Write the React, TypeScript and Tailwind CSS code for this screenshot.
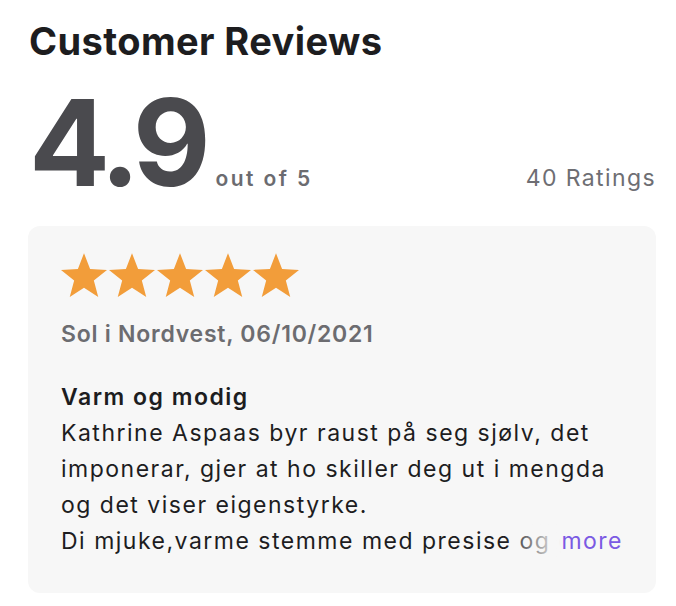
import React from 'react';

const Star: React.FC = () => (
  <svg viewBox="0 0 24 24" className="h-[48px] w-[48px] shrink-0" aria-hidden="true">
    <path
      d="M12 1.6l3.05 7.9 8.45.45-6.58 5.35 2.2 8.2L12 18.9l-7.12 4.6 2.2-8.2L.5 9.95l8.45-.45z"
      fill="#f29d3a"
    />
  </svg>
);

export default function App() {
  return (
    <div
      className="w-[676px] h-[606px] bg-white pl-[28px] pr-[20px] pt-[18px]"
      style={{ fontFamily: 'Inter, "Noto Sans", sans-serif' }}
    >
      <h1 className="pl-[1px] text-[38px] font-bold leading-[46px] tracking-[0.4px] text-[#1d1d1f]">
        Customer Reviews
      </h1>

      {/* Rating summary */}
      <div className="mt-[19px] flex items-baseline">
        <span className="pl-[1px] text-[120px] font-bold leading-[120px] tracking-[-6px] text-[#4a4a4e]">4.9</span>
        <span className="ml-[11px] text-[21px] font-semibold tracking-[2.4px] text-[#6b6b70]">out of 5</span>
        <span className="ml-auto text-[23px] tracking-[1.4px] text-[#6e6e73]">40 Ratings</span>
      </div>

      {/* Review card */}
      <div className="mt-[23px] rounded-[12px] bg-[#f7f7f7] px-[33px] pt-[24px] pb-[34px]">
        <div className="-ml-[1px] flex">
          <Star />
          <Star />
          <Star />
          <Star />
          <Star />
        </div>
        <p className="mt-[22px] text-[23px] font-semibold leading-[28px] tracking-[0.75px] text-[#6c6c70]">
          Sol i Nordvest, 06/10/2021
        </p>

        <div className="relative mt-[31px] text-[23px] leading-[36px] tracking-[1.5px] text-[#1d1d1f]">
          <h3 className="font-semibold">Varm og modig</h3>
          <div className="h-[144px] overflow-hidden">
            <p>Kathrine Aspaas byr raust på seg sjølv, det imponerar, gjer at ho skiller deg ut i mengda og det viser eigenstyrke.</p>
            <p className="whitespace-nowrap">Di mjuke,varme stemme med presise og gjennomtenkte ord fyller rommet.</p>
          </div>
          <div className="absolute bottom-0 right-0 flex h-[36px]">
            <div className="w-[56px] bg-gradient-to-r from-[#f7f7f7]/0 to-[#f7f7f7]" />
            <span className="bg-[#f7f7f7] text-[#7b5ae3]">more</span>
          </div>
        </div>
      </div>
    </div>
  );
}
